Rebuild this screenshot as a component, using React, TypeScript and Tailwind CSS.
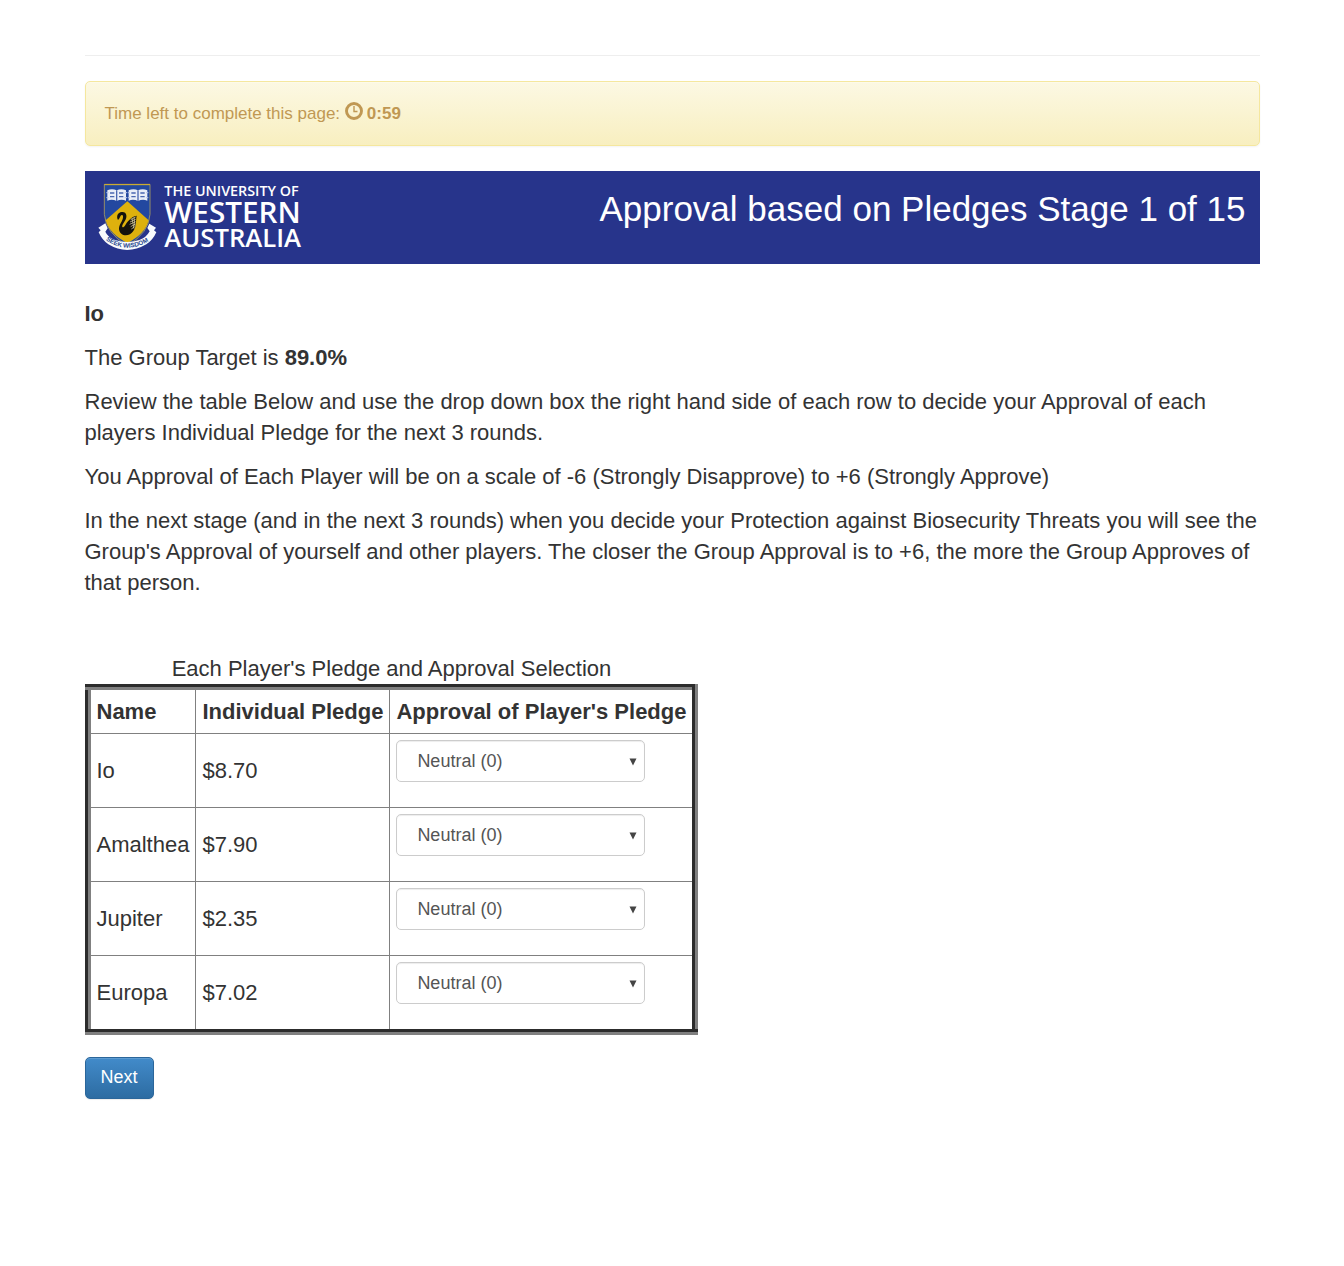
import { useState } from "react";

const players = [
  { name: "Io", pledge: "$8.70" },
  { name: "Amalthea", pledge: "$7.90" },
  { name: "Jupiter", pledge: "$2.35" },
  { name: "Europa", pledge: "$7.02" },
];

const scores = [-6, -5, -4, -3, -2, -1, 0, 1, 2, 3, 4, 5, 6];

function scoreLabel(score: number) {
  if (score === 0) return "Neutral (0)";
  if (score === -6) return "Strongly Disapprove (-6)";
  if (score === 6) return "Strongly Approve (+6)";
  return score > 0 ? `Approve (+${score})` : `Disapprove (${score})`;
}

function Book({ x }: { x: number }) {
  return (
    <g transform={`translate(${x} 54)`}>
      <path d="M0 4Q14 -3 28 4Q42 -3 56 4V35Q42 29 28 36Q14 29 0 35Z" fill="#e9eef8" />
      <path d="M28 4V36M8 12H21M8 23H21M35 12H48M35 23H48" stroke="#4a67b0" strokeWidth="4" fill="none" />
      <path d="M-3 11H4M-3 26H4M52 11H59M52 26H59" stroke="#b9c6e6" strokeWidth="3" />
    </g>
  );
}

function Logo() {
  return (
    <svg viewBox="0 0 690 279" className="w-[230px] shrink-0" role="img" aria-label="The University of Western Australia">
      <path d="M58 40H195V130Q192 186 127 224Q62 186 58 130Z" fill="#2348a0" stroke="#a99d60" strokeWidth="2.5" />
      <path d="M58 41H195" stroke="#d9b324" strokeWidth="3" />
      <path d="M127 91L191 148Q180 190 127 216Q74 190 62 148Z" fill="#deb10d" />
      <Book x={67} />
      <Book x={131} />
      <path
        d="M99 147C93 137 98 124 110 123C125 121 128 137 120 149C113 159 108 168 115 169C121 166 122 158 129 151C136 144 139 138 155 134C152 151 155 166 145 180C137 193 119 197 109 188C100 181 100 169 107 157C114 146 117 133 111 132C106 131 106 141 99 147Z"
        fill="#14120d"
      />
      <path d="M137 146L152 138M135 153L152 145M134 160L152 152M137 167L151 159M139 174L149 167M141 142L147 173M147 139L150 166" stroke="#f0e4b4" strokeWidth="2" />
      <path d="M61 157L40 170L47 178L41 184Q51 207 70 220Q126 254 184 220Q204 207 214 184L207 178L213 170L193 158L187 171L194 181Q184 200 163 207Q127 219 90 207Q68 198 61 182L68 172Z" fill="#f8fafc" />
      <path id="motto-curve" d="M62 207Q125 252 194 209" fill="none" />
      <text fill="#27468f" fontFamily="Liberation Sans, sans-serif" fontSize="19" fontWeight="700">
        <textPath href="#motto-curve">SEEK WISDOM</textPath>
      </text>
      <g fill="#ffffff" fontFamily="Open Sans, sans-serif">
        <text x="238" y="74" fontSize="43" fontWeight="600">THE UNIVERSITY OF</text>
        <text x="238" y="155" fontSize="89" fontWeight="600">WESTERN</text>
        <text x="238" y="227" fontSize="77" fontWeight="600">AUSTRALIA</text>
      </g>
    </svg>
  );
}

function ClockIcon() {
  return (
    <svg viewBox="0 0 18 18" className="mr-1 inline-block size-[18px] align-[-1px]" fill="none" stroke="currentColor" aria-hidden="true">
      <circle cx="9" cy="9" r="7.5" strokeWidth="2.9" />
      <path d="M9 4V9.5H12.5" strokeWidth="1.4" />
    </svg>
  );
}

function ApprovalSelect({ player }: { player: string }) {
  const [value, setValue] = useState("0");
  return (
    <div className="relative mb-[19px] w-[249px]">
      <select
        aria-label={`Approval of ${player}'s pledge`}
        value={value}
        onChange={(e) => setValue(e.target.value)}
        className="block h-[42px] w-full appearance-none rounded-[5px] border border-[#cccccc] bg-white pr-8 pl-5 text-[18px] text-[#555555] shadow-[inset_0_1px_1px_rgba(0,0,0,0.075)]"
      >
        {scores.map((score) => (
          <option key={score} value={score}>{scoreLabel(score)}</option>
        ))}
      </select>
      <svg viewBox="0 0 8 8" className="pointer-events-none absolute top-[18px] right-2 size-2 fill-[#444444]" aria-hidden="true">
        <path d="M0.5 0.5H7.5L4 7.5Z" />
      </svg>
    </div>
  );
}

export default function App() {
  return (
    <main className="mx-auto min-h-screen max-w-[1175px] bg-white pt-[55px] font-['Liberation_Sans',Arial,sans-serif] text-[22px] leading-[31px] text-[#333333]">
      <hr className="border-[#eeeeee]" />
      <div className="mt-[25px] rounded-[5px] border border-[#f5e79e] bg-linear-to-b from-[#fcf8e3] to-[#f8efc0] px-[19px] py-[19px] text-[17px] leading-[25px] text-[#c09853] shadow-[inset_0_1px_0_rgba(255,255,255,0.25),0_1px_2px_rgba(0,0,0,0.05)]">
        Time left to complete this page: <ClockIcon />
        <strong>0:59</strong>
      </div>

      <header className="mt-[25px] flex items-start justify-between bg-[#27348b] text-white">
        <Logo />
        <h1 className="pt-[18px] pr-[14px] text-[35px] leading-10">Approval based on Pledges Stage 1 of 15</h1>
      </header>

      <section className="mt-[34px] flex flex-col gap-[13px]">
        <p><strong>Io</strong></p>
        <p>The Group Target is <strong>89.0%</strong></p>
        <p>Review the table Below and use the drop down box the right hand side of each row to decide your Approval of each players Individual Pledge for the next 3 rounds.</p>
        <p>You Approval of Each Player will be on a scale of -6 (Strongly Disapprove) to +6 (Strongly Approve)</p>
        <p>In the next stage (and in the next 3 rounds) when you decide your Protection against Biosecurity Threats you will see the Group's Approval of yourself and other players. The closer the Group Approval is to +6, the more the Group Approves of that person.</p>
      </section>

      <table className="mt-[55px] border-collapse border-[6px] border-[#808080] [border-style:groove]">
        <caption className="caption-top">Each Player's Pledge and Approval Selection</caption>
        <thead>
          <tr>
            <th scope="col" className="border border-[#808080] px-1.5 py-1.5 text-left">Name</th>
            <th scope="col" className="border border-[#808080] px-1.5 py-1.5 text-left">Individual Pledge</th>
            <th scope="col" className="border border-[#808080] px-1.5 py-1.5 text-left">Approval of Player's Pledge</th>
          </tr>
        </thead>
        <tbody>
          {players.map((player) => (
            <tr key={player.name}>
              <td className="border border-[#808080] px-1.5">{player.name}</td>
              <td className="border border-[#808080] px-1.5">{player.pledge}</td>
              <td className="border border-[#808080] p-1.5"><ApprovalSelect player={player.name} /></td>
            </tr>
          ))}
        </tbody>
      </table>

      <button type="button" className="mt-[22px] h-[42px] rounded-[5px] border border-[#2b669a] bg-linear-to-b from-[#428bca] to-[#2d6ca2] px-[15px] pb-0.5 text-[18px] text-white shadow-[inset_0_1px_0_rgba(255,255,255,0.15),0_1px_1px_rgba(0,0,0,0.075)]">
        Next
      </button>
    </main>
  );
}
